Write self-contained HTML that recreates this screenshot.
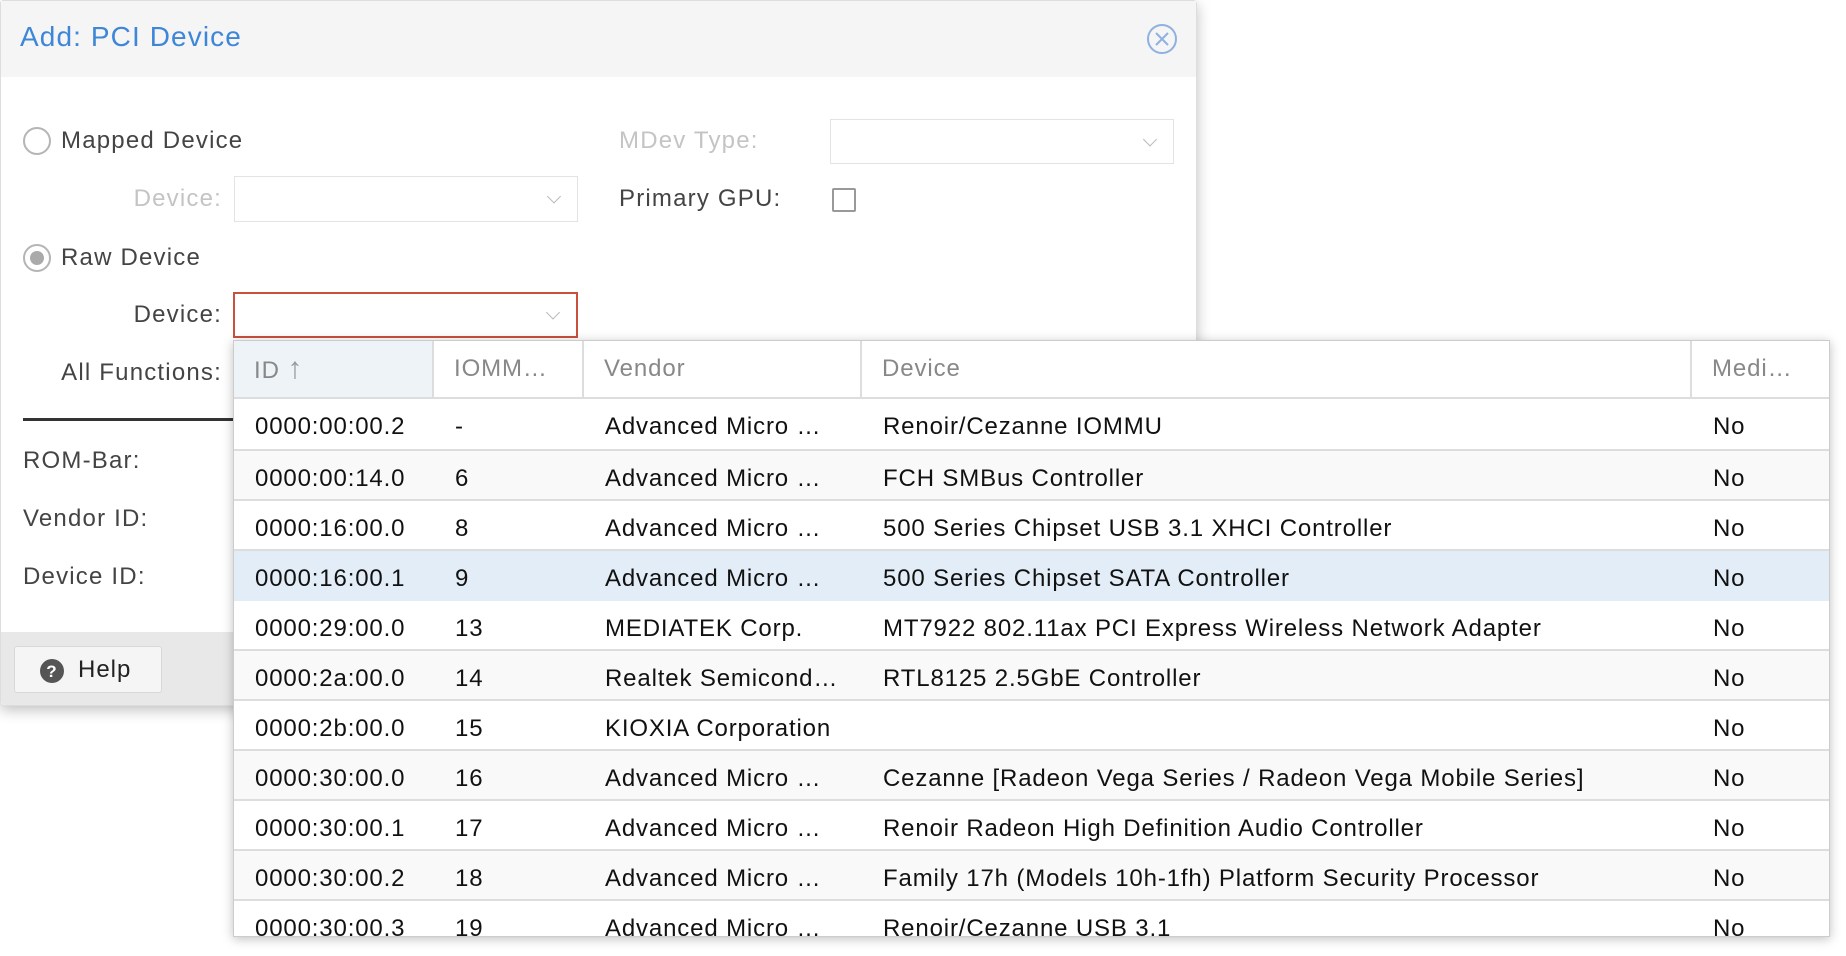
<!DOCTYPE html>
<html><head><meta charset="utf-8"><style>
*{box-sizing:border-box;margin:0;padding:0}
body{width:1846px;height:956px;background:#fff;font-family:"Liberation Sans",sans-serif;position:relative;overflow:hidden;color:#222}
.dlg{position:absolute;left:0;top:0;width:1197px;height:706px;background:#fff;border:1px solid #ddd;border-radius:4px;box-shadow:0 4px 14px rgba(0,0,0,.25)}
.hdr{position:absolute;left:0;top:0;right:0;height:76px;background:#f5f5f5}
.title{position:absolute;left:19px;top:20px;font-size:28px;color:#3e86d8;letter-spacing:1.1px}
.abs{position:absolute;font-size:24px;line-height:28px;letter-spacing:1.2px;white-space:nowrap}
.lbl{color:#444}
.dis{color:#c4c4c4}
.combo{position:absolute;border:1px solid #e3e3e3;background:#fff}
.combo:after{content:"";position:absolute;right:18px;top:50%;width:9px;height:9px;border-right:1.5px solid #bbb;border-bottom:1.5px solid #bbb;transform:translateY(-75%) rotate(45deg)}
.radio{position:absolute;width:28px;height:28px;border-radius:50%;border:2px solid #b5b5b5;background:#fff}
.foot{position:absolute;left:0;top:631px;right:0;bottom:0;background:#e8e8e8;border-radius:0 0 4px 4px}
.help{position:absolute;left:13px;top:14px;width:148px;height:47px;border:1px solid #d8d8d8;border-radius:3px;background:#f5f5f5;font-size:24px;color:#222;letter-spacing:1px}
.dd{position:absolute;left:233px;top:340px;width:1597px;height:597px;background:#fff;border:1px solid #ccc;box-shadow:0 2px 10px rgba(0,0,0,.25);overflow:hidden}
.th{position:absolute;top:0;height:58px;border-right:2px solid #ddd;border-bottom:2px solid #ddd;color:#888;font-size:24px;line-height:56px;padding-left:20px;white-space:nowrap;letter-spacing:0.9px}
.row{position:absolute;left:0;width:1597px;height:50px;border-bottom:2px solid #ddd;font-size:24px;line-height:56px;color:#111;letter-spacing:0.85px}
.row span{position:absolute;white-space:nowrap}
</style></head><body>
<div class="dlg">
 <div class="hdr"><div class="title">Add: PCI Device</div>
  <svg style="position:absolute;left:1145px;top:22px" width="32" height="32" viewBox="0 0 32 32"><circle cx="16" cy="16" r="14" fill="none" stroke="#8fb1e0" stroke-width="2"/><path d="M10 10L22 22M22 10L10 22" stroke="#8fb1e0" stroke-width="2"/></svg>
 </div>
 <div class="radio" style="left:22px;top:126px"></div>
 <div class="abs lbl" style="left:60px;top:126px">Mapped Device</div>
 <div class="abs dis" style="left:618px;top:126px">MDev Type:</div>
 <div class="combo" style="left:829px;top:118px;width:344px;height:45px"></div>
 <div class="abs dis" style="left:80px;width:141px;text-align:right;top:184px">Device:</div>
 <div class="combo" style="left:233px;top:175px;width:344px;height:46px"></div>
 <div class="abs lbl" style="left:618px;top:184px">Primary GPU:</div>
 <div style="position:absolute;left:831px;top:187px;width:24px;height:24px;border:2px solid #999;border-radius:2px"></div>
 <div class="radio" style="left:22px;top:243px"><div style="position:absolute;left:5px;top:5px;width:14px;height:14px;border-radius:50%;background:#aaa"></div></div>
 <div class="abs lbl" style="left:60px;top:243px">Raw Device</div>
 <div class="abs lbl" style="left:80px;width:141px;text-align:right;top:300px">Device:</div>
 <div class="combo" style="left:232px;top:291px;width:345px;height:46px;border:2px solid #c9503c"></div>
 <div class="abs lbl" style="left:20px;width:201px;text-align:right;top:358px">All Functions:</div>
 <div style="position:absolute;left:22px;top:417px;width:212px;height:3px;background:#333"></div>
 <div class="abs lbl" style="left:22px;top:446px">ROM-Bar:</div>
 <div class="abs lbl" style="left:22px;top:504px">Vendor ID:</div>
 <div class="abs lbl" style="left:22px;top:562px">Device ID:</div>
 <div class="foot"><div class="help">
  <svg style="position:absolute;left:25px;top:12px" width="24" height="24" viewBox="0 0 24 24"><circle cx="12" cy="12" r="12" fill="#555"/><text x="12" y="18" text-anchor="middle" font-family="Liberation Sans" font-weight="bold" font-size="17" fill="#fff">?</text></svg>
  <span style="position:absolute;left:63px;top:9px">Help</span></div></div>
</div>
<div class="dd">
 <div class="th" style="left:0;width:200px;background:#eef3f8">ID <span style="font-size:30px;color:#999">↑</span></div>
 <div class="th" style="left:200px;width:150px">IOMM…</div>
 <div class="th" style="left:350px;width:278px">Vendor</div>
 <div class="th" style="left:628px;width:830px">Device</div>
 <div class="th" style="left:1458px;width:139px;border-right:none">Medi…</div>
 <div class="row" style="top:58px;background:#fff;height:52px"><span style="left:21px">0000:00:00.2</span><span style="left:221px">-</span><span style="left:371px">Advanced Micro …</span><span style="left:649px">Renoir/Cezanne IOMMU</span><span style="left:1479px">No</span></div>
 <div class="row" style="top:110px;background:#f9f9f9"><span style="left:21px">0000:00:14.0</span><span style="left:221px">6</span><span style="left:371px">Advanced Micro …</span><span style="left:649px">FCH SMBus Controller</span><span style="left:1479px">No</span></div>
 <div class="row" style="top:160px;background:#fff"><span style="left:21px">0000:16:00.0</span><span style="left:221px">8</span><span style="left:371px">Advanced Micro …</span><span style="left:649px">500 Series Chipset USB 3.1 XHCI Controller</span><span style="left:1479px">No</span></div>
 <div class="row" style="top:210px;background:#e3edf7;border-bottom-color:#e3edf7"><span style="left:21px">0000:16:00.1</span><span style="left:221px">9</span><span style="left:371px">Advanced Micro …</span><span style="left:649px">500 Series Chipset SATA Controller</span><span style="left:1479px">No</span></div>
 <div class="row" style="top:260px;background:#fff"><span style="left:21px">0000:29:00.0</span><span style="left:221px">13</span><span style="left:371px">MEDIATEK Corp.</span><span style="left:649px">MT7922 802.11ax PCI Express Wireless Network Adapter</span><span style="left:1479px">No</span></div>
 <div class="row" style="top:310px;background:#f9f9f9"><span style="left:21px">0000:2a:00.0</span><span style="left:221px">14</span><span style="left:371px">Realtek Semicond…</span><span style="left:649px">RTL8125 2.5GbE Controller</span><span style="left:1479px">No</span></div>
 <div class="row" style="top:360px;background:#fff"><span style="left:21px">0000:2b:00.0</span><span style="left:221px">15</span><span style="left:371px">KIOXIA Corporation</span><span style="left:1479px">No</span></div>
 <div class="row" style="top:410px;background:#f9f9f9"><span style="left:21px">0000:30:00.0</span><span style="left:221px">16</span><span style="left:371px">Advanced Micro …</span><span style="left:649px">Cezanne [Radeon Vega Series / Radeon Vega Mobile Series]</span><span style="left:1479px">No</span></div>
 <div class="row" style="top:460px;background:#fff"><span style="left:21px">0000:30:00.1</span><span style="left:221px">17</span><span style="left:371px">Advanced Micro …</span><span style="left:649px">Renoir Radeon High Definition Audio Controller</span><span style="left:1479px">No</span></div>
 <div class="row" style="top:510px;background:#f9f9f9"><span style="left:21px">0000:30:00.2</span><span style="left:221px">18</span><span style="left:371px">Advanced Micro …</span><span style="left:649px">Family 17h (Models 10h-1fh) Platform Security Processor</span><span style="left:1479px">No</span></div>
 <div class="row" style="top:560px;background:#fff"><span style="left:21px">0000:30:00.3</span><span style="left:221px">19</span><span style="left:371px">Advanced Micro …</span><span style="left:649px">Renoir/Cezanne USB 3.1</span><span style="left:1479px">No</span></div>
</div>
</body></html>
